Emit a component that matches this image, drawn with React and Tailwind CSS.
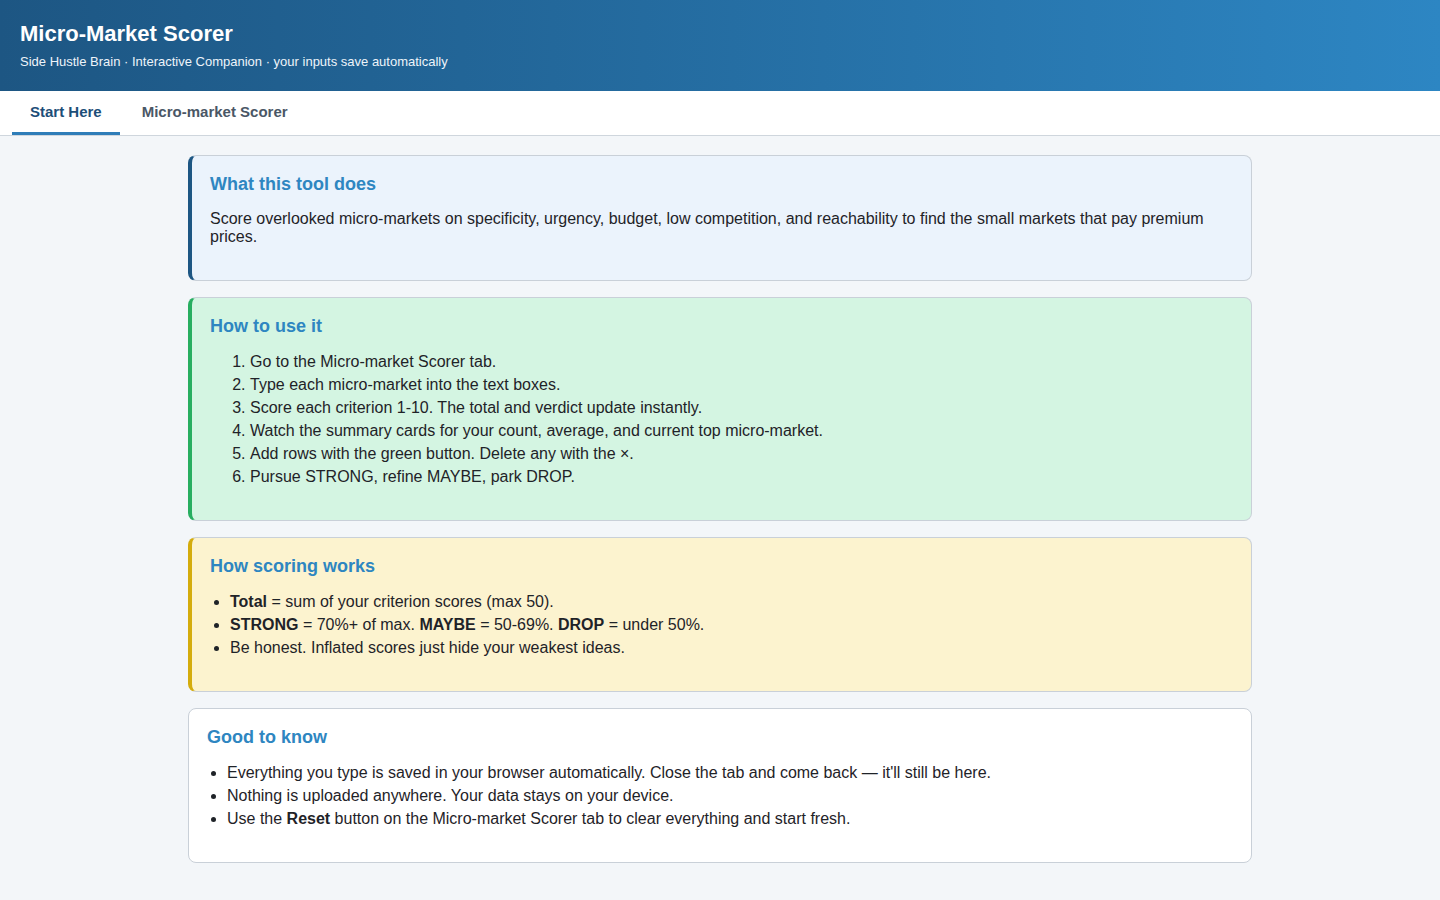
import React from 'react';

const font = { fontFamily: '"Liberation Sans", Arial, sans-serif' };

const Card = ({ accent, bg, title, children }) => (
  <section
    className={`rounded-[8px] border border-[#c9d0d8] ${bg} ${accent ? `border-l-4 ${accent} pl-[18px]` : 'pl-[18px]'} pr-[18px] pt-[18px] pb-[18px]`}
  >
    <h3 className="m-0 text-[18px] leading-[21px] font-bold text-[#2e86c1] mb-[13px]">{title}</h3>
    {children}
  </section>
);

const App = () => {
  return (
    <div className="min-h-screen bg-[#f3f6f9] text-[#1f2328]" style={font}>
      <header className="bg-gradient-to-r from-[#1d5683] to-[#2d86c3] px-5 pt-[21px] pb-[22px] text-white">
        <h1 className="text-[22px] leading-[26px] font-bold">Micro-Market Scorer</h1>
        <p className="mt-[7px] text-[13px] leading-[15px] text-[#eef4fa]">
          Side Hustle Brain · Interactive Companion · your inputs save automatically
        </p>
      </header>

      <nav className="flex gap-1 border-b border-[#cfd6dd] bg-white px-3">
        <button className="border-b-[3px] border-[#2e7db8] px-[18px] pt-3 pb-[12px] text-[15px] leading-[17px] font-bold text-[#1d4e78]">
          Start Here
        </button>
        <button className="border-b-[3px] border-transparent px-[18px] pt-3 pb-[12px] text-[15px] leading-[17px] font-bold text-[#4a5766]">
          Micro-market Scorer
        </button>
      </nav>

      <main className="mx-auto flex w-[1064px] flex-col gap-4 pt-[19px] pb-10">
        <Card accent="border-l-[#1d5683]" bg="bg-[#ebf3fc]" title="What this tool does">
          <p className="mt-[15px] mb-4 text-[16px] leading-[18px]">
            Score overlooked micro-markets on specificity, urgency, budget, low competition, and reachability to find the small markets that pay premium prices.
          </p>
        </Card>

        <Card accent="border-l-[#27ae60]" bg="bg-[#d4f5e2]" title="How to use it">
          <ol className="mb-[14px] list-decimal pl-10 text-[16px] leading-[23px]">
            <li>Go to the Micro-market Scorer tab.</li>
            <li>Type each micro-market into the text boxes.</li>
            <li>Score each criterion 1-10. The total and verdict update instantly.</li>
            <li>Watch the summary cards for your count, average, and current top micro-market.</li>
            <li>Add rows with the green button. Delete any with the ×.</li>
            <li>Pursue STRONG, refine MAYBE, park DROP.</li>
          </ol>
        </Card>

        <Card accent="border-l-[#d4ac0d]" bg="bg-[#fcf3cf]" title="How scoring works">
          <ul className="mb-[14px] list-disc pl-5 text-[16px] leading-[23px]">
            <li><b>Total</b> = sum of your criterion scores (max 50).</li>
            <li><b>STRONG</b> = 70%+ of max. <b>MAYBE</b> = 50-69%. <b>DROP</b> = under 50%.</li>
            <li>Be honest. Inflated scores just hide your weakest ideas.</li>
          </ul>
        </Card>

        <Card bg="bg-white" title="Good to know">
          <ul className="mb-[14px] list-disc pl-5 text-[16px] leading-[23px]">
            <li>Everything you type is saved in your browser automatically. Close the tab and come back — it'll still be here.</li>
            <li>Nothing is uploaded anywhere. Your data stays on your device.</li>
            <li>Use the <b>Reset</b> button on the Micro-market Scorer tab to clear everything and start fresh.</li>
          </ul>
        </Card>
      </main>
    </div>
  );
};

export default App;
